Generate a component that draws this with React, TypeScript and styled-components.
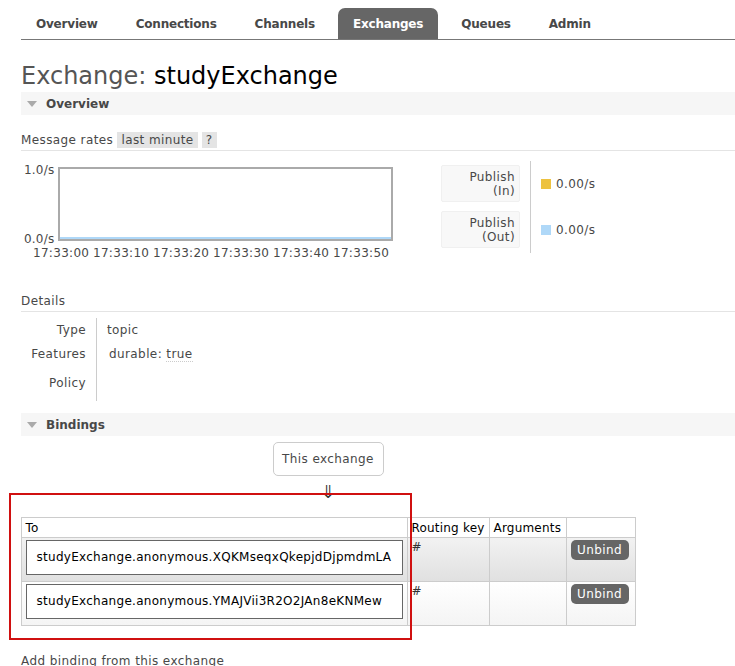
import styled, { createGlobalStyle } from 'styled-components';

const GlobalStyle = createGlobalStyle`
  html, body {
    margin: 0;
    padding: 0;
    background: #fff;
  }
  body {
    font-family: "DejaVu Sans", Verdana, sans-serif;
    font-size: 12px;
    letter-spacing: 0.4px;
    color: #484848;
    overflow: hidden;
  }
`;

const tabs = ['Overview', 'Connections', 'Channels', 'Exchanges', 'Queues', 'Admin'];
const times = ['17:33:00', '17:33:10', '17:33:20', '17:33:30', '17:33:40', '17:33:50'];
const bindings = [
  { to: 'studyExchange.anonymous.XQKMseqxQkepjdDjpmdmLA', key: '#', hover: true },
  { to: 'studyExchange.anonymous.YMAJVii3R2O2JAn8eKNMew', key: '#', hover: false },
];

function App() {
  return (
    <>
      <GlobalStyle />
      <Page>
        <Menu>
          {tabs.map((t) => (
            <Tab key={t} active={t === 'Exchanges'}>
              {t}
            </Tab>
          ))}
        </Menu>

        <Title>
          <TitleLabel>Exchange:</TitleLabel> studyExchange
        </Title>

        <SectionHeader>
          <Triangle />
          Overview
        </SectionHeader>

        <SubHeading>
          Message rates <Pill>last minute</Pill> <Pill>?</Pill>
        </SubHeading>

        <ChartRow>
          <ChartBlock>
            <ChartArea>
              <YAxis>
                <span>1.0/s</span>
                <span>0.0/s</span>
              </YAxis>
              <Plot>
                <PlotLine />
              </Plot>
            </ChartArea>
            <XAxis>
              {times.map((t) => (
                <span key={t}>{t}</span>
              ))}
            </XAxis>
          </ChartBlock>

          <Legend>
            <LegendLabels>
              <LegendBox>
                Publish
                <br />
                (In)
              </LegendBox>
              <LegendBox>
                Publish
                <br />
                (Out)
              </LegendBox>
            </LegendLabels>
            <LegendValues>
              <LegendValue>
                <Swatch color='#edc240' />
                0.00/s
              </LegendValue>
              <LegendValue>
                <Swatch color='#afd8f8' />
                0.00/s
              </LegendValue>
            </LegendValues>
          </Legend>
        </ChartRow>

        <SubHeading>Details</SubHeading>

        <Facts>
          <FactRow height={24}>
            <FactKey>Type</FactKey>
            <FactValue>topic</FactValue>
          </FactRow>
          <FactRow height={24}>
            <FactKey>Features</FactKey>
            <FactValue indent>
              durable: <Abbr>true</Abbr>
            </FactValue>
          </FactRow>
          <FactRow height={35}>
            <FactKey>Policy</FactKey>
            <FactValue />
          </FactRow>
        </Facts>

        <SectionHeader>
          <Triangle />
          Bindings
        </SectionHeader>

        <BindingsArea>
          <SourceBox>This exchange</SourceBox>
          <Arrow>⇓</Arrow>
          <Highlight />
          <BindingTable>
            <thead>
              <tr>
                <Th width={386}>To</Th>
                <Th width={82}>Routing key</Th>
                <Th width={77}>Arguments</Th>
                <Th width={69}></Th>
              </tr>
            </thead>
            <tbody>
              {bindings.map((b) => (
                <BindingRow key={b.to} hover={b.hover}>
                  <Td>
                    <Destination>{b.to}</Destination>
                  </Td>
                  <Td>{b.key}</Td>
                  <Td></Td>
                  <Td>
                    <UnbindButton>Unbind</UnbindButton>
                  </Td>
                </BindingRow>
              ))}
            </tbody>
          </BindingTable>
        </BindingsArea>

        <AddBinding>Add binding from this exchange</AddBinding>
      </Page>
    </>
  );
}

const Page = styled.div`
  padding: 8px 0 0 21px;
`;

const Menu = styled.ul`
  display: flex;
  gap: 8px;
  list-style: none;
  margin: 0;
  padding: 0;
  border-bottom: 1px solid #777;
`;

const Tab = styled.li<{ active?: boolean }>`
  height: 31px;
  line-height: 32px;
  padding: 0 15px;
  font-weight: bold;
  font-size: 12px;
  letter-spacing: -0.2px;
  color: ${(p) => (p.active ? '#fff' : '#484848')};
  background: ${(p) => (p.active ? '#666' : 'transparent')};
  border-radius: 7px 7px 0 0;
`;

const Title = styled.h1`
  margin: 21px 0 0;
  height: 31px;
  font-size: 24px;
  font-weight: normal;
  letter-spacing: 0;
  color: #000;
  line-height: 31px;
`;

const TitleLabel = styled.span`
  color: #555;
`;

const SectionHeader = styled.div`
  display: flex;
  align-items: center;
  height: 23px;
  padding-left: 6px;
  background: #f6f6f6;
  font-weight: bold;
  font-size: 12px;
  letter-spacing: 0;
  color: #484848;
`;

const Triangle = styled.span`
  width: 0;
  height: 0;
  border-left: 5px solid transparent;
  border-right: 5px solid transparent;
  border-top: 6px solid #aaa;
  margin: 1px 9px 0 0;
`;

const SubHeading = styled.div`
  margin-top: 16px;
  padding-bottom: 1px;
  border-bottom: 1px solid #e4e4e4;
  color: #484848;
  line-height: 18px;
`;

const Pill = styled.span`
  background: #e4e4e4;
  padding: 1px 4px;
`;

const ChartRow = styled.div`
  display: flex;
  align-items: flex-start;
  gap: 48px;
  margin: 16px 0 33px;
`;

const ChartBlock = styled.div`
  display: flex;
  flex-direction: column;
`;

const ChartArea = styled.div`
  display: flex;
  align-items: flex-start;
  height: 74px;
`;

const YAxis = styled.div`
  width: 37px;
  display: flex;
  flex-direction: column;
  justify-content: space-between;
  padding-left: 3px;
  box-sizing: border-box;
  height: 81px;
  margin-top: -3px;
  line-height: 12px;
  letter-spacing: 0.2px;
`;

const Plot = styled.div`
  width: 331px;
  height: 70px;
  border: 2px solid #aaa;
  background: #fff;
  display: flex;
  align-items: flex-end;
`;

const PlotLine = styled.div`
  width: 100%;
  height: 2px;
  background: #afd8f8;
`;

const XAxis = styled.div`
  display: flex;
  padding-left: 12px;
  margin-top: 6px;
  line-height: 12px;
  letter-spacing: 0.3px;
  span {
    width: 60px;
  }
`;

const Legend = styled.div`
  display: flex;
  margin-top: -6px;
`;

const LegendLabels = styled.div`
  display: flex;
  flex-direction: column;
  gap: 9px;
  padding: 4px 10px 5px 0;
  border-right: 1px solid #ccc;
`;

const LegendBox = styled.div`
  width: 79px;
  height: 37px;
  box-sizing: border-box;
  padding: 4px 4px 0 0;
  background: #f8f8f8;
  border: 1px solid #f0f0f0;
  border-radius: 2px;
  text-align: right;
  line-height: 14px;
`;

const LegendValues = styled.div`
  display: flex;
  flex-direction: column;
  gap: 9px;
  padding: 4px 0 5px 10px;
`;

const LegendValue = styled.div`
  display: flex;
  align-items: center;
  height: 37px;
`;

const Swatch = styled.span<{ color: string }>`
  width: 10px;
  height: 10px;
  background: ${(p) => p.color};
  margin-right: 5px;
`;

const Facts = styled.div`
  margin: 6px 0 12px;
  display: flex;
  flex-direction: column;
`;

const FactRow = styled.div<{ height: number }>`
  display: flex;
  height: ${(p) => p.height}px;
  line-height: ${(p) => p.height}px;
`;

const FactKey = styled.div`
  width: 65px;
  text-align: right;
  padding-right: 10px;
`;

const FactValue = styled.div<{ indent?: boolean }>`
  border-left: 1px solid #ccc;
  padding-left: ${(p) => (p.indent ? 12 : 10)}px;
`;

const Abbr = styled.span`
  border-bottom: 1px dotted #ccc;
`;

const BindingsArea = styled.div`
  position: relative;
  width: 614px;
  display: flex;
  flex-direction: column;
  align-items: center;
  margin-top: 6px;
  padding-bottom: 28px;
`;

const SourceBox = styled.div`
  width: 111px;
  height: 34px;
  box-sizing: border-box;
  border: 1px solid #ccc;
  border-radius: 5px;
  line-height: 32px;
  text-align: center;
`;

const Arrow = styled.div`
  height: 41px;
  line-height: 32px;
  font-size: 18px;
  color: #333;
`;

const Highlight = styled.div`
  position: absolute;
  left: -12px;
  top: 51px;
  width: 399px;
  height: 143px;
  border: 2px solid #d01010;
  pointer-events: none;
`;

const BindingTable = styled.table`
  border-collapse: collapse;
  width: 614px;
  table-layout: fixed;
`;

const Th = styled.th<{ width: number }>`
  width: ${(p) => p.width}px;
  height: 20px;
  box-sizing: border-box;
  border: 1px solid #ccc;
  padding: 0 4px;
  text-align: left;
  font-weight: normal;
  letter-spacing: 0.2px;
  white-space: nowrap;
  color: #000;
`;

const BindingRow = styled.tr<{ hover: boolean }>`
  background: ${(p) =>
    p.hover
      ? 'linear-gradient(#f2f2f2, #e0e0e0)'
      : 'linear-gradient(#ffffff, #f4f4f4)'};
`;

const Td = styled.td`
  height: 44px;
  box-sizing: border-box;
  border: 1px solid #ccc;
  padding: 2px 4px;
  vertical-align: top;
  color: #333;
`;

const Destination = styled.div`
  height: 35px;
  box-sizing: border-box;
  border: 1px solid #666;
  background: #fff;
  padding-left: 10px;
  line-height: 33px;
  letter-spacing: 0.28px;
  white-space: nowrap;
  color: #000;
`;

const UnbindButton = styled.button`
  font-family: inherit;
  font-size: 12px;
  letter-spacing: 0.4px;
  width: 58px;
  height: 20px;
  border: none;
  border-radius: 5px;
  background: #666;
  color: #fff;
  padding: 0;
`;

const AddBinding = styled.div`
  color: #484848;
`;

export default App;
